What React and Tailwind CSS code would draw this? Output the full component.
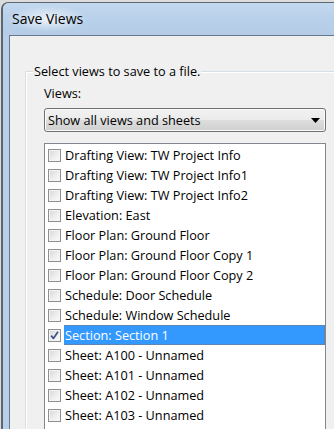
import React from "react";

const items = [
  "Drafting View: TW Project Info",
  "Drafting View: TW Project Info1",
  "Drafting View: TW Project Info2",
  "Elevation: East",
  "Floor Plan: Ground Floor",
  "Floor Plan: Ground Floor Copy 1",
  "Floor Plan: Ground Floor Copy 2",
  "Schedule: Door Schedule",
  "Schedule: Window Schedule",
  "Section: Section 1",
  "Sheet: A100 - Unnamed",
  "Sheet: A101 - Unnamed",
  "Sheet: A102 - Unnamed",
  "Sheet: A103 - Unnamed",
];

function Check({ checked }) {
  return (
    <div className="w-[13px] h-[13px] shrink-0 border border-[#8e8f8f] bg-[linear-gradient(135deg,#d6d6d6_0%,#eeeeee_55%,#fbfbfb_100%)] shadow-[inset_0_0_0_1px_#f4f4f4] relative">
      {checked && (
        <svg width="11" height="11" viewBox="0 0 11 11" className="absolute left-0 top-0">
          <path d="M2.2 5.6 L4.4 8.4 L9 1.8" fill="none" stroke="#3f5486" strokeWidth="1.7" strokeLinejoin="round" />
        </svg>
      )}
    </div>
  );
}

export default function App() {
  return (
    <div className="w-[334px] h-[429px] overflow-hidden bg-[#dcdcdc] pt-[2px] pl-[1px] font-['Segoe_UI','Open_Sans',sans-serif] text-black">
      <div className="w-[400px] h-[500px] rounded-tl-[7px] border-l-2 border-t border-[#5c6670] bg-[#b7cfe8] flex flex-col">
        <div className="h-[32px] shrink-0 flex items-center pl-[4px] bg-[linear-gradient(180deg,#c4d9ef_0%,#b9d1ea_40%,#b4cce6_100%)] rounded-tl-[6px]">
          <span className="px-[5px] py-[4px] text-[14px] leading-[18px] bg-[radial-gradient(closest-side,rgba(255,255,255,0.75),rgba(255,255,255,0))]">
            Save Views
          </span>
        </div>
        <div className="ml-[6px] flex-1 border-l border-t border-[#68788c] bg-[#f0f0f0] text-[12.7px]">
          <div className="relative mt-[35px] ml-[15px] w-[330px] h-[420px] border border-[#d5dfe5] shadow-[inset_1px_1px_0_#ffffff] pl-[18px] pt-[13px]">
            <div className="absolute -top-[9px] left-[7px] px-[1px] bg-[#f0f0f0] leading-[16px]">
              Select views to save to a file.
            </div>
            <div className="leading-[16px]">Views:</div>
            <div className="mt-[7px] w-[282px] h-[24px] rounded-[3px] border border-[#707070] bg-[linear-gradient(180deg,#f2f2f2_0%,#ebebeb_48%,#dddddd_52%,#cfcfcf_100%)] shadow-[inset_0_0_0_1px_#fbfbfb] flex items-center justify-between pl-[3px] pr-[5px]">
              <span className="leading-[16px]">Show all views and sheets</span>
              <svg width="9" height="5" viewBox="0 0 9 5">
                <path d="M0 0 H9 L4.5 5 Z" fill="#000" />
              </svg>
            </div>
            <div className="mt-[11px] w-[282px] h-[300px] border border-[#828790] bg-white pt-[1px] pl-[3px]">
              {items.map((t, i) => {
                const sel = i === 9;
                return (
                  <div key={t} className="h-[20px] flex items-center">
                    <Check checked={sel} />
                    <div
                      className={
                        sel
                          ? "ml-[3px] flex-1 h-[20px] flex items-center pl-[1px] bg-[#3399ff] text-white border border-[#5f86b1] border-l-0"
                          : "ml-[3px] flex-1 h-[20px] flex items-center pl-[1px]"
                      }
                    >
                      <span className="leading-[16px] whitespace-nowrap">{t}</span>
                    </div>
                  </div>
                );
              })}
            </div>
          </div>
        </div>
      </div>
    </div>
  );
}
